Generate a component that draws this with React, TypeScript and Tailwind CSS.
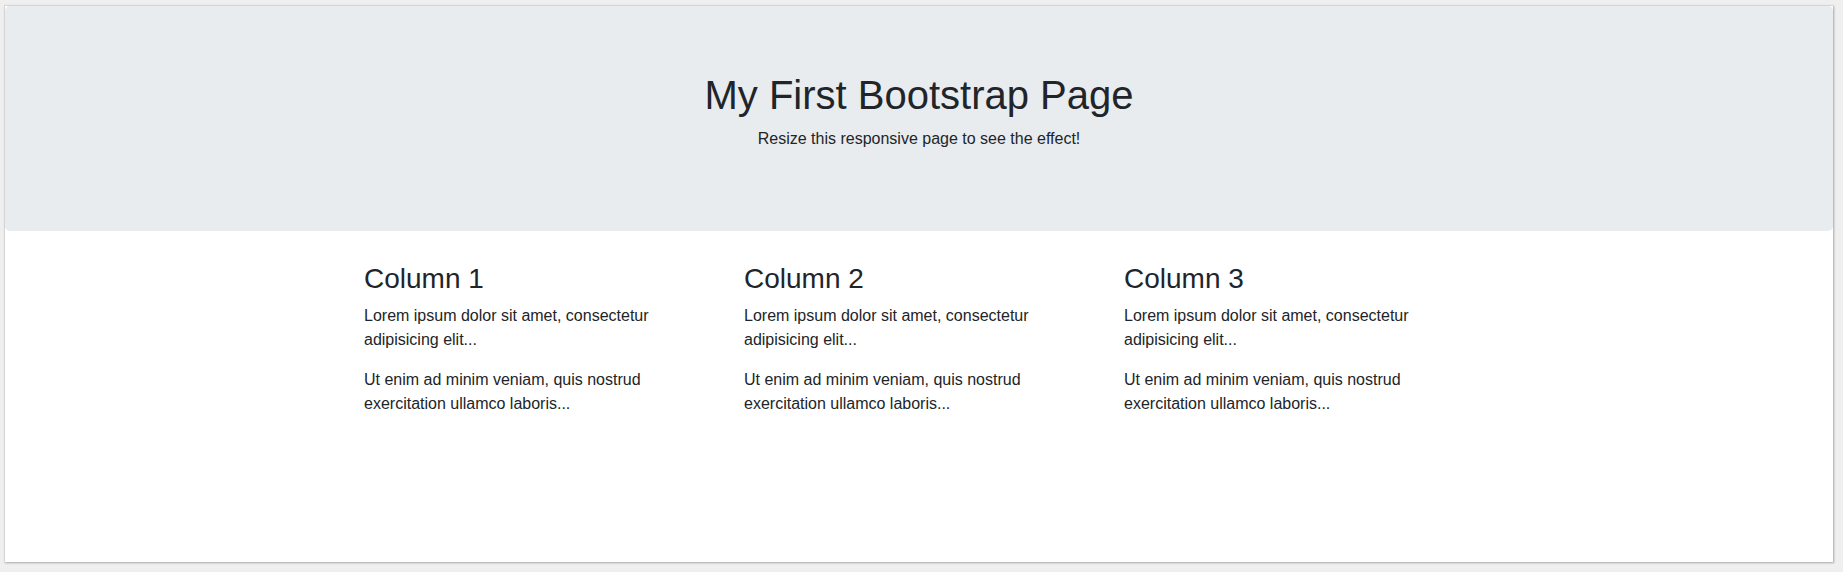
const columns = [
  { title: "Column 1" },
  { title: "Column 2" },
  { title: "Column 3" },
];

export default function App() {
  return (
    <div className="h-[572px] w-[1843px] bg-[#efefef] pl-[4px] pt-[5px] font-['Liberation_Sans',Arial,sans-serif] text-[#212529]">
      <div className="h-[557px] w-[1829px] border-l border-t border-[#d6d6d6] bg-white shadow-[1px_1px_2px_rgba(0,0,0,0.3)]">
        <div className="mb-[31px] rounded-[0.3rem] bg-[#e9ecef] px-8 pt-[65px] pb-16 text-center">
          <h1 className="mb-2 text-[40px] leading-[48px] font-medium">My First Bootstrap Page</h1>
          <p className="mb-4 text-base leading-6">Resize this responsive page to see the effect!</p>
        </div>
        <div className="mx-auto w-[1140px] px-[15px]">
          <div className="-mx-[15px] grid grid-cols-3">
            {columns.map((col) => (
              <div key={col.title} className="px-[15px]">
                <h3 className="mb-2 text-[28px] leading-[33.6px] font-medium">{col.title}</h3>
                <p className="mb-4 text-base leading-6">
                  Lorem ipsum dolor sit amet, consectetur adipisicing elit...
                </p>
                <p className="mb-4 text-base leading-6">
                  Ut enim ad minim veniam, quis nostrud exercitation ullamco laboris...
                </p>
              </div>
            ))}
          </div>
        </div>
      </div>
    </div>
  );
}
